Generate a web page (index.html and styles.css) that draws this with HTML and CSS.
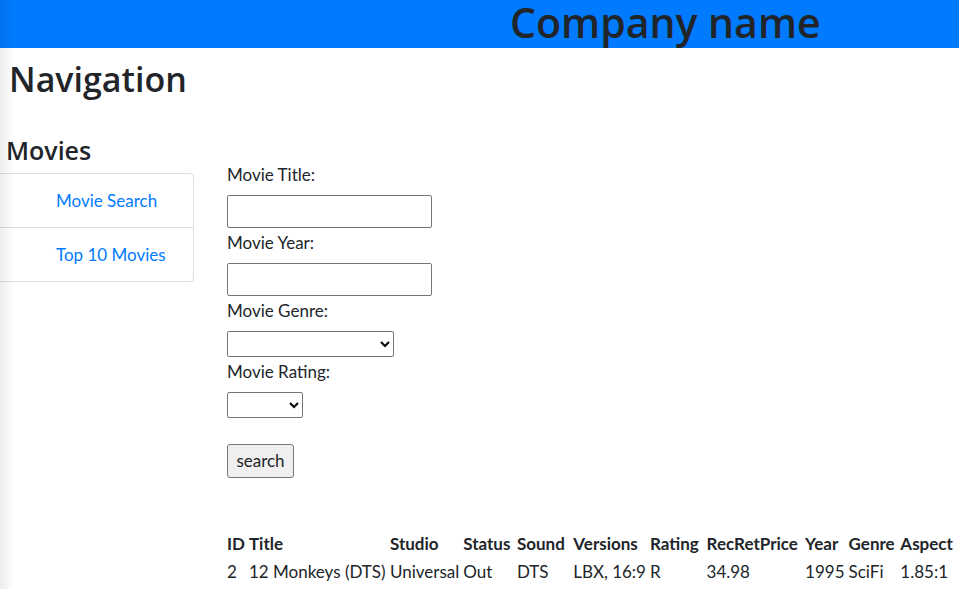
FILE: index.html
```html
<!DOCTYPE html>
<html lang="en">
<head>
<meta charset="utf-8">
<title>Movies</title>
<link rel="stylesheet" href="styles.css">
</head>
<body>
<div class="edge-shadow"></div>
<header class="topbar">
  <h1 class="brand">Company name</h1>
</header>
<div class="page">
  <h2 class="nav-title">Navigation</h2>
  <div class="layout">
    <aside class="sidebar">
      <h4 class="side-title">Movies</h4>
      <ul class="list-group">
        <li class="list-item"><a href="#">Movie Search</a></li>
        <li class="list-item"><a href="#">Top 10 Movies</a></li>
      </ul>
    </aside>
    <main class="content">
      <form class="search-form">
        <label class="field-label" for="title">Movie Title:</label>
        <input class="text-input" id="title" type="text">
        <label class="field-label" for="year">Movie Year:</label>
        <input class="text-input" id="year" type="text">
        <label class="field-label" for="genre">Movie Genre:</label>
        <select class="select genre-select" id="genre"><option></option></select>
        <label class="field-label" for="rating">Movie Rating:</label>
        <select class="select rating-select" id="rating"><option></option></select>
        <button class="search-btn" type="button">search</button>
      </form>
      <table class="results">
        <thead>
          <tr>
            <th class="c-id">ID</th>
            <th class="c-title">Title</th>
            <th class="c-studio">Studio</th>
            <th class="c-status">Status</th>
            <th class="c-sound">Sound</th>
            <th class="c-versions">Versions</th>
            <th class="c-rating">Rating</th>
            <th class="c-price">RecRetPrice</th>
            <th class="c-year">Year</th>
            <th class="c-genre">Genre</th>
            <th class="c-aspect">Aspect</th>
          </tr>
        </thead>
        <tbody>
          <tr>
            <td>2</td>
            <td>12 Monkeys (DTS)</td>
            <td>Universal</td>
            <td>Out</td>
            <td>DTS</td>
            <td>LBX, 16:9</td>
            <td>R</td>
            <td>34.98</td>
            <td>1995</td>
            <td>SciFi</td>
            <td>1.85:1</td>
          </tr>
        </tbody>
      </table>
    </main>
  </div>
</div>
</body>
</html>
```

FILE: styles.css
```css
* { box-sizing: border-box; }

html, body {
  margin: 0;
  padding: 0;
  background: #fff;
}

body {
  font-family: "Segoe UI", Lato, "Noto Sans", sans-serif;
  font-size: 17px;
  line-height: 24px;
  color: #212529;
  overflow: hidden;
  height: 589px;
}

.edge-shadow {
  position: fixed;
  left: 0;
  top: 0;
  bottom: 0;
  width: 14px;
  background: linear-gradient(to right, rgba(0,0,0,0.07), rgba(0,0,0,0));
  pointer-events: none;
  z-index: 10;
}

.topbar {
  background: #007bff;
  height: 48px;
  padding-left: 510px;
}

.brand,
.nav-title,
.side-title {
  font-family: "Segoe UI", "Open Sans", sans-serif;
  font-weight: 600;
  color: #212529;
  white-space: nowrap;
}

.brand {
  margin: 0;
  font-size: 41px;
  line-height: 45px;
}

.nav-title {
  margin: 10px 0 0 9px;
  font-size: 34px;
  line-height: 42px;
}

.layout {
  display: flex;
  align-items: flex-start;
  margin-top: 33px;
}

.sidebar {
  width: 194px;
  flex: none;
}

.side-title {
  margin: 1px 0 7px 6px;
  font-size: 25px;
  line-height: 32px;
}

.list-group {
  list-style: none;
  margin: 0;
  padding: 0;
  border: 1px solid #dfdfdf;
  border-left: none;
  border-radius: 0 4px 4px 0;
}

.list-item {
  padding: 15px 0 14px 56px;
  line-height: 24px;
}

.list-item + .list-item {
  border-top: 1px solid #dfdfdf;
}

.list-item a {
  color: #007bff;
  text-decoration: none;
}

.content {
  margin-left: 33px;
}

.search-form {
  display: flex;
  flex-direction: column;
  align-items: flex-start;
  padding-top: 30px;
}

.field-label {
  line-height: 24px;
  margin-bottom: 8px;
}

.text-input {
  width: 205px;
  height: 33px;
  border: 1px solid #767676;
  border-radius: 2px;
  margin: 0 0 3px 0;
  font: inherit;
}

.select {
  height: 26px;
  border: 1px solid #767676;
  border-radius: 2px;
  margin: 0 0 3px 0;
  background: #fff;
  font: inherit;
  font-size: 13px;
}

.genre-select { width: 167px; }
.rating-select { width: 76px; }

.search-btn {
  margin-top: 23px;
  width: 67px;
  height: 34px;
  background: #efefef;
  border: 1px solid #767676;
  border-radius: 3px;
  font: inherit;
  color: #212529;
  padding: 0;
}

.results {
  margin-top: 51px;
  margin-left: -3px;
  border-collapse: separate;
  border-spacing: 2px;
  white-space: nowrap;
  table-layout: fixed;
}

.results th,
.results td {
  padding: 1px;
  text-align: left;
  line-height: 24px;
}

.results th {
  font-weight: 700;
}

.c-id { width: 19px; }
.c-title { width: 139px; }
.c-studio { width: 71px; }
.c-status { width: 52px; }
.c-sound { width: 55px; }
.c-versions { width: 70px; }
.c-rating { width: 55px; }
.c-price { width: 97px; }
.c-year { width: 40px; }
.c-genre { width: 50px; }
.c-aspect { width: 58px; }
```
